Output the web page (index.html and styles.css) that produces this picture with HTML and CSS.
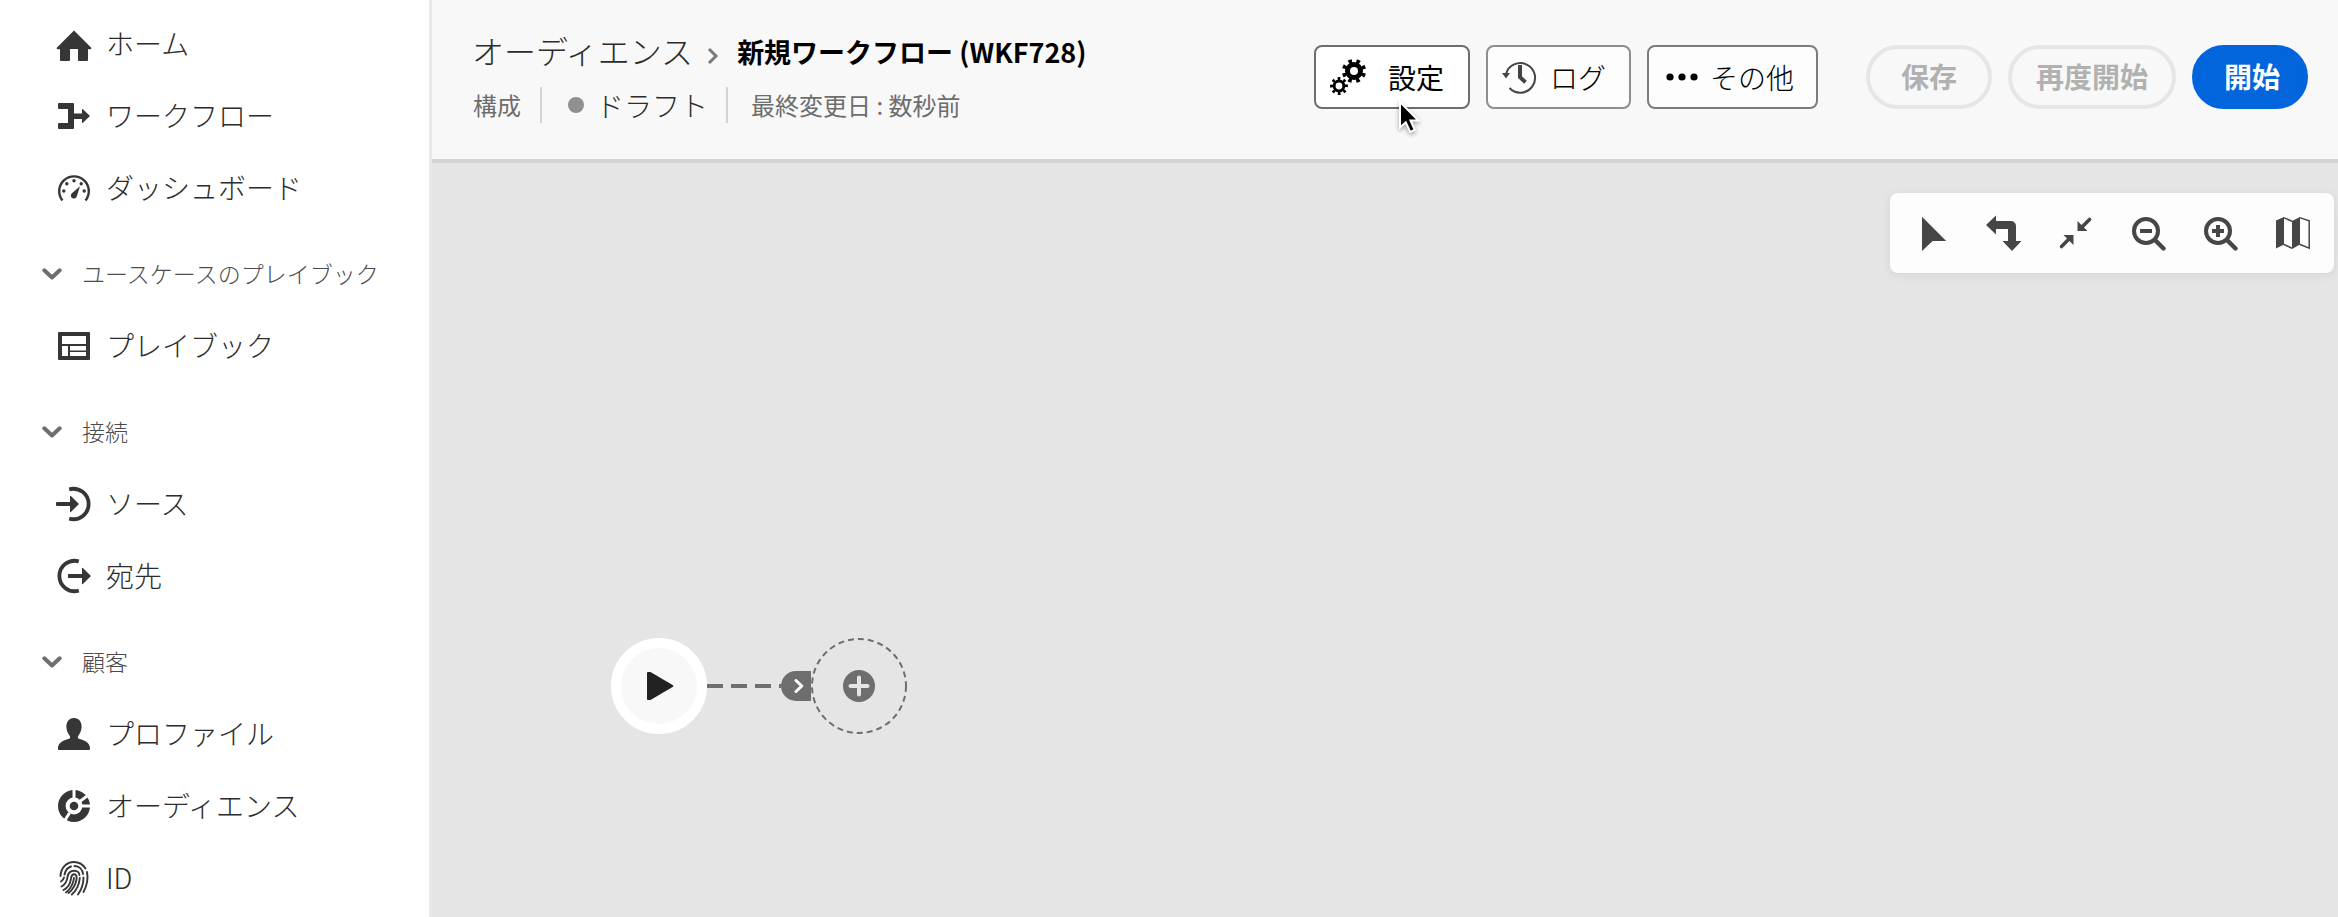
FILE: index.html
```html
<!DOCTYPE html>
<html lang="ja">
<head>
<meta charset="utf-8">
<title>新規ワークフロー (WKF728)</title>
<link rel="stylesheet" href="styles.css">
</head>
<body>
<div class="app">
  <nav class="sidebar" aria-label="メイン">
    <a class="nav-item" href="#">
      <svg class="icon" viewBox="0 0 36 36"><path d="M18 4.5 35 21.4a1 1 0 0 1-.7 1.8H32V34a1 1 0 0 1-1 1h-8a1 1 0 0 1-1-1V23h-8v11a1 1 0 0 1-1 1H5a1 1 0 0 1-1-1V23.200H1.700A1 1 0 0 1 1 21.400Z"/></svg>
      <span>ホーム</span></a>
    <a class="nav-item" href="#">
      <svg class="icon" viewBox="0 0 36 36"><path d="M3 5h14a1 1 0 0 1 1 1v9.500h8V11.500q0-1 .9-.3L34 18l-7.100 6.800q-.9.700-.9-.3V21h-8v9a1 1 0 0 1-1 1H3a1 1 0 0 1-1-1v-4a1 1 0 0 1 1-1h9V11H3a1 1 0 0 1-1-1V6a1 1 0 0 1 1-1Z"/></svg>
      <span>ワークフロー</span></a>
    <a class="nav-item" href="#">
      <svg class="icon" viewBox="0 0 36 36"><path class="line" stroke-width="2.400" d="M6.500 30.500A14.800 14.800 0 1 1 29.500 30.500"/><circle cx="7.800" cy="21" r="1.700"/><circle cx="10.800" cy="13.800" r="1.700"/><circle cx="18" cy="10.800" r="1.700"/><circle cx="25.200" cy="13.800" r="1.700"/><circle cx="28.200" cy="21" r="1.700"/><path d="M24 16.200 20.800 26.200A3 3 0 1 1 15.600 23.600Z"/></svg>
      <span>ダッシュボード</span></a>

    <button class="nav-heading" type="button" aria-expanded="true">
      <svg class="chevron" viewBox="0 0 20 12"><path d="M2.300 2.300 10 9.500 17.700 2.300"/></svg>
      <span>ユースケースのプレイブック</span></button>
    <a class="nav-item" href="#">
      <svg class="icon" viewBox="0 0 36 36"><path fill-rule="evenodd" d="M3 4h30a1 1 0 0 1 1 1v26a1 1 0 0 1-1 1H3a1 1 0 0 1-1-1V5a1 1 0 0 1 1-1ZM6 8v8h24V8ZM6 18v10h6V18ZM14 18v4.500h16V18ZM14 24v4h16v-4Z"/></svg>
      <span>プレイブック</span></a>

    <button class="nav-heading" type="button" aria-expanded="true">
      <svg class="chevron" viewBox="0 0 20 12"><path d="M2.300 2.300 10 9.500 17.700 2.300"/></svg>
      <span>接続</span></button>
    <a class="nav-item" href="#">
      <svg class="icon" viewBox="0 0 36 36"><path class="line" stroke-width="3.800" d="M13.200 3.400A15.200 15.200 0 1 1 13.200 32.600"/><path d="M1 16h13v-5.600q0-1 .9-.3L23 18l-8.100 7.900q-.9.700-.9-.3V20H1a1 1 0 0 1-1-1v-2a1 1 0 0 1 1-1Z"/></svg>
      <span>ソース</span></a>
    <a class="nav-item" href="#">
      <svg class="icon" viewBox="0 0 36 36"><path class="line" stroke-width="3.800" d="M22.800 3.400A15.200 15.200 0 1 0 22.800 32.600"/><path d="M12 16h14v-5.600q0-1 .9-.3L35 18l-8.100 7.900q-.9.700-.9-.3V20H12Z"/></svg>
      <span>宛先</span></a>

    <button class="nav-heading" type="button" aria-expanded="true">
      <svg class="chevron" viewBox="0 0 20 12"><path d="M2.300 2.300 10 9.500 17.700 2.300"/></svg>
      <span>顧客</span></button>
    <a class="nav-item" href="#">
      <svg class="icon" viewBox="0 0 36 36"><path d="M18 2c5 0 7.600 3.600 7.600 8.600 0 3.600-1.300 6.800-3.100 8.800-.8.900-.8 2.800.2 3.300C28 24 34 26.500 34 32v1a1 1 0 0 1-1 1H3a1 1 0 0 1-1-1v-1c0-5.500 6-8 11.300-9.300 1-.5 1-2.400.2-3.300-1.800-2-3.100-5.200-3.100-8.800C10.400 5.600 13 2 18 2Z"/></svg>
      <span>プロファイル</span></a>
    <a class="nav-item" href="#">
      <svg class="icon" viewBox="0 0 36 36"><circle class="line" cx="18" cy="18" r="12.200" stroke-width="7.600"/><circle cx="18" cy="18" r="4.300"/><path class="cut" d="M18 1v9M23.600 13.600 32.500 7M26 18h9M13.500 25 8.500 33"/></svg>
      <span>オーディエンス</span></a>
    <a class="nav-item" href="#">
      <svg class="icon" viewBox="0 0 36 36"><g class="line print"><path d="M4.500 16C5 7 11 2 18 2c5 0 9 2.500 11.500 6.500"/><path d="M31 12c1 5 .8 12-3.500 20"/><path d="M8.500 14.500C9.500 10 12 7.500 15 6.500M18.500 6c5 0 8 3.500 8.500 8"/><path d="M5 21.500c1.500-.8 2.500-2 3-4M5.500 26.500c4-2 5.500-5.500 6-9.500.6-4 3.500-6.300 6.800-6.300 3 0 5 2 5.200 4.300"/><path d="M7.500 30c5-2.500 7-7 7.500-11.500.4-3 1.500-4.200 3.200-4.200 2 0 2.800 2 2.300 5-.8 5-3.500 10-8 13.700"/><path d="M18 18c-.7 6-3 10.500-8 14.500M23.800 18c-.5 6-3 12-8 16.500M27.500 17.500c0 6-1.500 11.500-5.500 17"/></g></svg>
      <span>ID</span></a>
  </nav>

  <div class="main">
    <header class="header">
      <div class="heading">
        <div class="crumbs">
          <a class="crumb" href="#">オーディエンス</a>
          <svg class="crumb-sep" viewBox="0 0 12 18"><path d="M2 2 9 9 2 16"/></svg>
          <h1 class="title">新規ワークフロー (WKF728)</h1>
        </div>
        <div class="meta">
          <span class="meta-text">構成</span>
          <span class="status"><span class="dot"></span>ドラフト</span>
          <span class="meta-text">最終変更日 : 数秒前</span>
        </div>
      </div>
      <div class="actions">
        <div class="group">
          <div class="pointed">
            <button class="tool-btn strong" type="button">
              <svg class="icon" viewBox="0 0 36 36"><g class="gear"><circle cx="24" cy="12" r="6.500" stroke-width="5"/><circle cx="24" cy="12" r="10.200" stroke-width="3.800" stroke-dasharray="3.600 4.411" transform="rotate(12 24 12)"/><circle cx="9" cy="27" r="4.900" stroke-width="3"/><circle cx="9" cy="27" r="7.400" stroke-width="3" stroke-dasharray="2.600 3.212" transform="rotate(-12 9 27)"/></g></svg>
              <span>設定</span></button>
            <svg class="pointer" viewBox="0 0 24 36"><path d="M2 2v25.500l5.800-5.200 4.400 9.700 4.600-2-4.300-9.500h7.900Z"/></svg>
          </div>
          <button class="tool-btn log" type="button">
            <svg class="icon" viewBox="0 0 36 36"><path class="line" stroke-width="2" d="M4 15A14.800 14.800 0 1 1 7.500 29"/><path d="M0 14h8l-4 5.500Z"/><path class="line" stroke-width="4" d="M18 6v12.200l5.500 5"/></svg>
            <span>ログ</span></button>
          <button class="tool-btn more" type="button">
            <svg class="dots" viewBox="0 0 32 8"><circle cx="4" cy="4" r="3.600"/><circle cx="16" cy="4" r="3.600"/><circle cx="28" cy="4" r="3.600"/></svg>
            <span>その他</span></button>
        </div>
        <div class="group">
          <button class="pill save" type="button" disabled>保存</button>
          <button class="pill" type="button" disabled>再度開始</button>
          <button class="pill primary" type="button">開始</button>
        </div>
      </div>
    </header>

    <main class="canvas">
      <div class="toolbar" role="toolbar" aria-label="キャンバス">
        <button type="button" aria-label="選択"><svg class="icon" viewBox="0 0 36 36"><path d="M8 1.800 32.200 26H18.600L8 36Z"/></svg></button>
        <button type="button" aria-label="方向"><svg class="icon" viewBox="0 0 36 36"><path d="M0 10 10 .5V6h15a5 5 0 0 1 5 5v15h5.500L26 36l-9.500-10H22V14H10v5.500Z"/></svg></button>
        <button type="button" aria-label="合わせる"><svg class="icon" viewBox="0 0 36 36"><path class="line" stroke-width="3.600" stroke-linecap="round" d="M31.500 4.500 24 12M3.500 31.500 11 24"/><path d="M19.500 6V16h10ZM5.500 20H15.500v10Z"/></svg></button>
        <button type="button" aria-label="縮小"><svg class="icon" viewBox="0 0 36 36"><circle class="line" cx="16" cy="16" r="12" stroke-width="4"/><path class="line" stroke-width="4.400" stroke-linecap="round" d="M25.500 25.500 33.500 33.500"/><path d="M10 14h12v4H10Z"/></svg></button>
        <button type="button" aria-label="拡大"><svg class="icon" viewBox="0 0 36 36"><circle class="line" cx="16" cy="16" r="12" stroke-width="4"/><path class="line" stroke-width="4.400" stroke-linecap="round" d="M25.500 25.500 33.500 33.500"/><path d="M10 14h4v-4h4v4h4v4h-4v4h-4v-4h-4Z"/></svg></button>
        <button type="button" aria-label="マップ"><svg class="icon" viewBox="0 0 36 36"><path d="M2 5.500 10 2v27.500L2 33.500ZM18 6l8-4v27.500L18 34Z"/><path class="line" stroke-width="1.500" d="M9.500 2.600 18 6.200M9.500 29.200 18 33.200M25.500 2.600 35.200 5.800V33.200L25.500 29.200"/></svg></button>
      </div>

      <div class="node start"><svg viewBox="0 0 28 30"><path d="M1 2q0-1 1-1h2.500L27 14.200q1 .8 0 1.600L4.500 29H2q-1 0-1-1Z"/></svg></div>
      <svg class="edge" viewBox="0 0 74 4"><path d="M0 2h74"/></svg>
      <div class="port"><svg viewBox="0 0 10 14"><path d="M2 1.500 7.800 7 2 12.500"/></svg></div>
      <button class="node add" type="button" aria-label="アクティビティを追加">
        <svg viewBox="0 0 96 96"><circle class="ring" cx="48" cy="48" r="47"/><circle class="disc" cx="48" cy="48" r="16"/><path class="plus" d="M48 39.500v17M39.500 48h17"/></svg>
      </button>
    </main>
  </div>
</div>
</body>
</html>
```

FILE: styles.css
```css
* { box-sizing: border-box; }

body {
  margin: 0;
  font-family: "Noto Sans CJK JP", "Noto Sans", sans-serif;
  font-size: 28px;
  line-height: 40px;
  color: #2c2c2c;
  background: #e5e5e5;
}

button {
  font: inherit;
  color: inherit;
  margin: 0;
  padding: 0;
  border: 0;
  background: none;
}

a { color: inherit; text-decoration: none; }

svg { display: block; flex: none; }

.app { display: flex; min-height: 100vh; }

.icon { width: 36px; height: 36px; fill: currentColor; }
.line { fill: none; stroke: currentColor; }

/* Sidebar */
.sidebar {
  flex: none;
  display: flex;
  flex-direction: column;
  width: 432px;
  padding-top: 8px;
  background: #fff;
  border-right: 3px solid #e8e8e8;
  font-weight: 300;
}

.nav-item {
  display: flex;
  align-items: center;
  gap: 14px;
  height: 72px;
  padding-left: 56px;
}
.nav-item .icon { color: #363636; }
.nav-item span { padding-bottom: 2px; }

.nav-heading {
  display: flex;
  align-items: center;
  gap: 20px;
  height: 72px;
  margin-top: 14px;
  padding-left: 42px;
  font-size: 23px;
  color: #4b4b4b;
}
.nav-heading span { padding-bottom: 3px; }

.chevron { width: 20px; height: 12px; }
.chevron path {
  fill: none;
  stroke: #6e6e6e;
  stroke-width: 4;
  stroke-linecap: round;
  stroke-linejoin: round;
}

.cut { stroke: #fff; stroke-width: 3; }
.print { stroke-width: 1.9; stroke-linecap: round; }

/* Header */
.main { flex: 1; display: flex; flex-direction: column; min-width: 0; }

.header {
  display: flex;
  justify-content: space-between;
  align-items: flex-start;
  padding: 28px 30px 36px 40px;
  background: #f8f8f8;
  border-bottom: 4px solid #d4d4d4;
  white-space: nowrap;
}

.crumbs { display: flex; align-items: center; height: 48px; }
.crumb { padding-bottom: 4px; font-size: 32px; font-weight: 300; }
.crumb-sep { width: 12px; height: 18px; margin: 8px 18px 0 14px; }
.crumb-sep path { fill: none; stroke: #7a7a7a; stroke-width: 3; }
.title { margin: 0; font-size: 27px; font-weight: 700; color: #000; }

.meta { display: flex; align-items: center; height: 36px; margin-top: 11px; }
.meta-text { padding: 0 19px 0 1px; font-size: 24px; color: #6d6d6d; }
.status {
  display: flex;
  align-items: center;
  gap: 12px;
  height: 36px;
  margin-right: 22px;
  padding: 0 18px 0 26px;
  border: 2px solid #d3d3d3;
  border-width: 0 2px;
  font-weight: 300;
}
.dot { width: 16px; height: 16px; border-radius: 50%; background: #909090; }

.actions { display: flex; gap: 48px; padding-top: 17px; }
.group { display: flex; gap: 16px; }

.tool-btn {
  display: flex;
  align-items: center;
  gap: 12px;
  height: 64px;
  padding: 0 23px 0 14px;
  border: 2px solid #8e8e8e;
  border-radius: 8px;
  background: #fdfdfd;
  color: #000;
  font-weight: 300;
}
.tool-btn.strong {
  gap: 22px;
  padding-right: 24px;
  border-color: #6e6e6e;
  background: #fff;
  font-weight: 400;
}
.tool-btn.more { padding: 0 22px 0 17px; border-color: #7c7c7c; }
.log .icon { color: #444; }
.dots { width: 32px; height: 8px; }
.gear { fill: none; stroke: #000; }

.pointed { position: relative; }
.pointer {
  position: absolute;
  left: 84px;
  top: 55px;
  width: 24px;
  height: 36px;
  overflow: visible;
  filter: drop-shadow(0 2px 2px rgba(0, 0, 0, .35));
  pointer-events: none;
}
.pointer path { fill: #000; stroke: #fff; stroke-width: 2; }

.pill {
  height: 64px;
  padding: 0 24px 2px;
  border: 4px solid #e6e6e6;
  border-radius: 32px;
  font-weight: 700;
  color: #b1b1b1;
}
.pill.save { padding: 0 31px 2px; }
.pill.primary {
  padding: 0 24px 2px 28px;
  border-color: #0265dc;
  background: #0265dc;
  color: #fff;
}

/* Canvas */
.canvas { position: relative; flex: 1; padding: 30px 4px; }

.toolbar {
  display: flex;
  width: max-content;
  height: 80px;
  margin-left: auto;
  padding: 0 6px;
  border-radius: 8px;
  background: #fdfdfd;
  box-shadow: 0 2px 10px rgba(0, 0, 0, .08);
}
.toolbar button {
  display: flex;
  align-items: center;
  justify-content: center;
  width: 72px;
  color: #464646;
}

.node {
  position: absolute;
  top: 475px;
  display: grid;
  place-items: center;
  width: 96px;
  height: 96px;
  border-radius: 50%;
}
.start { left: 179px; padding-left: 2px; border: 10px solid #fff; background: #f8f8f8; }
.start svg { width: 28px; height: 30px; fill: #222; }

.edge { position: absolute; left: 275px; top: 521px; width: 74px; height: 4px; }
.edge path { stroke: #6e6e6e; stroke-width: 4; stroke-dasharray: 16 8; }

.port {
  position: absolute;
  left: 349px;
  top: 508px;
  display: grid;
  place-items: center;
  width: 30px;
  height: 30px;
  padding-left: 5px;
  border-radius: 15px 0 0 15px;
  background: #6e6e6e;
}
.port svg { width: 10px; height: 14px; }
.port path {
  fill: none;
  stroke: #fff;
  stroke-width: 3;
  stroke-linecap: round;
  stroke-linejoin: round;
}

.add { left: 379px; }
.add svg { width: 96px; height: 96px; }
.ring { fill: none; stroke: #6e6e6e; stroke-width: 2; stroke-dasharray: 6 4; }
.disc { fill: #6e6e6e; }
.plus { stroke: #e5e5e5; stroke-width: 4; stroke-linecap: round; }
```
